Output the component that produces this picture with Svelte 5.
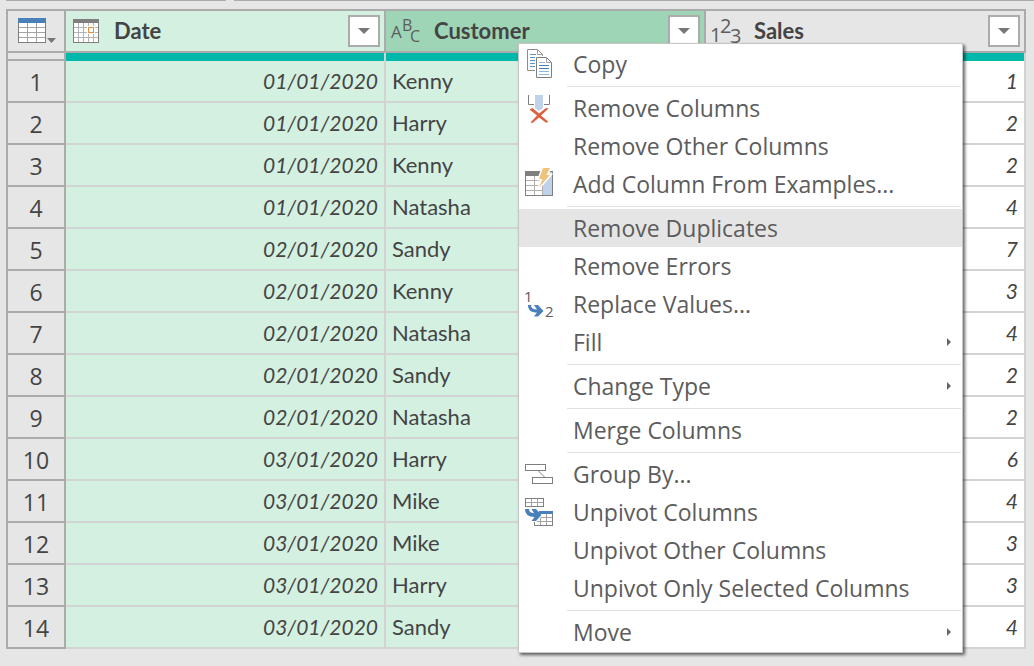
<script>
  const rows = [
    ['01/01/2020', 'Kenny', 1],
    ['01/01/2020', 'Harry', 2],
    ['01/01/2020', 'Kenny', 2],
    ['01/01/2020', 'Natasha', 4],
    ['02/01/2020', 'Sandy', 7],
    ['02/01/2020', 'Kenny', 3],
    ['02/01/2020', 'Natasha', 4],
    ['02/01/2020', 'Sandy', 2],
    ['02/01/2020', 'Natasha', 2],
    ['03/01/2020', 'Harry', 6],
    ['03/01/2020', 'Mike', 4],
    ['03/01/2020', 'Mike', 3],
    ['03/01/2020', 'Harry', 3],
    ['03/01/2020', 'Sandy', 4]
  ];

  const columns = [
    { name: 'Date', icon: 'date', state: 'selected' },
    { name: 'Customer', icon: 'text', state: 'active' },
    { name: 'Sales', icon: 'number', state: '' }
  ];

  const groups = [
    [{ label: 'Copy', icon: 'copy' }],
    [
      { label: 'Remove Columns', icon: 'remove' },
      { label: 'Remove Other Columns' },
      { label: 'Add Column From Examples...', icon: 'examples' }
    ],
    [
      { label: 'Remove Duplicates', current: true },
      { label: 'Remove Errors' },
      { label: 'Replace Values...', icon: 'replace' },
      { label: 'Fill', submenu: true }
    ],
    [{ label: 'Change Type', submenu: true }],
    [{ label: 'Merge Columns' }],
    [
      { label: 'Group By...', icon: 'group' },
      { label: 'Unpivot Columns', icon: 'unpivot' },
      { label: 'Unpivot Other Columns' },
      { label: 'Unpivot Only Selected Columns' }
    ],
    [{ label: 'Move', submenu: true }]
  ];
</script>

<div class="strip"><span class="strip-start"></span><span class="strip-rest"></span></div>

<main>
  <table>
    <colgroup>
      <col class="index-col" />
      <col /><col /><col />
    </colgroup>
    <thead>
      <tr class="names">
        <th class="corner">
          <button class="table-menu" aria-label="Table options">
            <svg width="40" height="28" viewBox="0 0 40 28" shape-rendering="crispEdges">
              <rect x="0" y="1" width="28" height="25" fill="#7f7f7f" />
              <rect x="1" y="6" width="26" height="19" fill="#fff" />
              <rect x="0" y="1" width="28" height="5" fill="#4a80ba" />
              <path d="M9.5 6V25M18.5 6V25M1 10.5H27M1 15.5H27M1 20.5H27" stroke="#a3a3a3" fill="none" />
              <path d="M29 21H38L33.5 26Z" fill="#777" shape-rendering="auto" />
            </svg>
          </button>
        </th>
        {#each columns as column}
          <th class={column.state} scope="col">
            <div class="heading">
              <span class="type">
                {#if column.icon === 'date'}
                  <svg width="32" height="40" viewBox="0 -4 32 40" shape-rendering="crispEdges">
                    <rect x="3" y="4" width="26" height="24" fill="#7f7f7f" />
                    <rect x="4" y="8" width="24" height="19" fill="#fff" />
                    <path d="M8.5 8V27M13.5 8V27M18.5 8V27M23.5 8V27M4 12.5H28M4 17.5H28M4 22.5H28" stroke="#b3b3b3" fill="none" />
                    <rect x="17" y="11" width="8" height="8" fill="#fff" />
                    <rect x="18.5" y="12.5" width="5" height="5" fill="#fff" stroke="#ed8b3a" />
                  </svg>
                {:else if column.icon === 'text'}
                  <svg width="32" height="40" viewBox="0 -4 32 40">
                    <text x="1" y="23" font-size="17">A</text>
                    <text x="12" y="16" font-size="16">B</text>
                    <text x="20" y="27" font-size="16">C</text>
                  </svg>
                {:else}
                  <svg width="32" height="40" viewBox="0 -4 32 40">
                    <text x="0" y="27" font-size="20">1</text>
                    <text x="10" y="18" font-size="20">2</text>
                    <text x="20" y="28" font-size="20">3</text>
                  </svg>
                {/if}
              </span>
              <span class="name">{column.name}</span>
              <button class="filter" aria-label="Filter {column.name}">
                <svg width="12" height="6" viewBox="0 0 12 6"><path d="M0 0H12L6 6Z" fill="#777" /></svg>
              </button>
            </div>
          </th>
        {/each}
      </tr>
      <tr class="quality">
        <td class="gap"></td><td></td><td></td><td></td>
      </tr>
    </thead>
    <tbody>
      {#each rows as [date, customer, sales], i}
        <tr>
          <th scope="row">{i + 1}</th>
          <td class="selected value">{date}</td>
          <td class="selected">{customer}</td>
          <td class="value">{sales}</td>
        </tr>
      {/each}
    </tbody>
  </table>
</main>

<div class="menu" role="menu">
  {#each groups as group, g}
    {#if g > 0}<div class="separator" role="separator"></div>{/if}
    {#each group as item}
      <button class="item" class:current={item.current} role="menuitem" aria-haspopup={item.submenu ? 'menu' : undefined}>
        <svg class="icon" width="32" height="38" viewBox="0 0 32 38" fill="none">
          {#if item.icon === 'copy'}
            <path d="M4.5 4.5H14.5L19.5 9.5V25.5H4.5Z" fill="#fff" stroke="#8c8c8c" />
            <path d="M14.5 4.5V9.5H19.5" stroke="#a3a3a3" />
            <path d="M7 9.5H13M7 12.5H16M7 15.5H16M7 18.5H16M7 21.5H16" stroke="#5b93cb" />
            <rect x="12" y="11" width="18" height="23" fill="#fff" />
            <path d="M13.5 12.5H23.5L28.5 17.5V32.5H13.5Z" fill="#fff" stroke="#7f7f7f" />
            <path d="M23.5 12.5V17.5H28.5" stroke="#a3a3a3" />
            <path d="M16 17.5H22M16 26.5H26M16 29.5H26" stroke="#8fb7de" />
            <path d="M16 20.5H26M16 23.5H26" stroke="#4a80ba" />
          {:else if item.icon === 'remove'}
            <path d="M5.5 6V15.5H11M21 15.5H26.5V6" stroke="#7f7f7f" />
            <path d="M12 6H20V19L16 22L12 19Z" fill="#bfd2e9" />
            <path d="M6.5 20.5L9.5 19L16 24.5L23 19L25.5 19.5L18 26.5L25 32.5L23.5 34L16 28.5L9.5 34L7.5 33.5L14 26.5Z" fill="#db6040" />
          {:else if item.icon === 'examples'}
            <rect x="2.5" y="6.5" width="27" height="24" fill="#fff" stroke="#7f7f7f" />
            <rect x="2" y="6" width="28" height="5" fill="#7f7f7f" />
            <rect x="20" y="7" width="9" height="23" fill="#bfd2e9" />
            <path d="M11.5 11V30M19.5 11V30M3 15.5H20M3 20.5H20M3 25.5H20" stroke="#b0b0b0" />
            <path d="M20 3H27L23.5 10H27L16 22.5L19.5 14H16Z" fill="#efc27e" stroke="#fff" stroke-width="3" paint-order="stroke" />
          {:else if item.icon === 'replace'}
            <text x="1" y="17" font-size="15">1</text>
            <text x="22" y="32" font-size="15">2</text>
            <path d="M5 20H8C8 23 10 24.5 14 24.5L11 20H15L20.5 26L15 31.5H11L14 27.5C8 27.5 5 25 5 20Z" fill="#4a80ba" />
          {:else if item.icon === 'group'}
            <rect x="2.5" y="9.5" width="20" height="6" fill="#fff" stroke="#7f7f7f" />
            <rect x="9.5" y="22.5" width="20" height="6" fill="#fff" stroke="#7f7f7f" />
            <path d="M15.5 16L22 22.5" stroke="#7f7f7f" />
          {:else if item.icon === 'unpivot'}
            <rect x="2.5" y="5.5" width="18" height="8" fill="#fff" stroke="#7f7f7f" />
            <path d="M8.5 6V13M14.5 6V13M3 9.5H20" stroke="#a3a3a3" />
            <rect x="11.5" y="18.5" width="18" height="14" fill="#fff" stroke="#7f7f7f" />
            <path d="M17.5 21V32M23.5 21V32M12 24.5H29M12 28.5H29" stroke="#a3a3a3" />
            <path d="M2 16H6C6 18.5 7.5 20 11 20L8.5 16H13L18.5 22L13 28H8.5L11.5 24C5.5 24 2 21 2 16Z" fill="#4a80ba" stroke="#fff" stroke-width="2" paint-order="stroke" />
            <rect x="16" y="18" width="14" height="3" fill="#4a80ba" />
          {/if}
        </svg>
        <span class="label">{item.label}</span>
        {#if item.submenu}
          <svg width="4" height="8" viewBox="0 0 4 8"><path d="M0 0L4 4L0 8Z" fill="#666" /></svg>
        {/if}
      </button>
    {/each}
  {/each}
</div>

<style>
  :global(body) {
    background: #e6e6e6;
  }

  .strip {
    display: flex;
    gap: 8px;
    height: 1px;
    padding-left: 6px;
  }

  .strip-start {
    width: 220px;
    background: #ababab;
  }

  .strip-rest {
    flex: 1;
    background: #ababab;
  }

  main {
    padding: 8px 8px 16px 6px;
  }

  table {
    width: 100%;
    table-layout: fixed;
    border-collapse: separate;
    border-spacing: 0;
    font-family: Lato, Calibri, sans-serif;
    font-size: 22px;
    line-height: 40px;
    color: #444;
  }

  .index-col {
    width: 60px;
  }

  th,
  td {
    box-sizing: border-box;
    padding: 0 6px;
    text-align: left;
    border: 0 solid #d3d3d3;
    border-width: 0 2px 2px 0;
  }

  tbody td {
    height: 42px;
    background: #fff;
  }

  tbody .selected {
    background: #d4f0e1;
  }

  tbody .value {
    text-align: right;
    font-size: 21px;
    font-style: italic;
  }

  tbody th {
    padding: 2px 0 0;
    border-color: #ababab;
    border-left-width: 2px;
    text-align: center;
    font-family: "Open Sans", "Segoe UI", sans-serif;
    font-size: 23px;
    font-weight: 400;
    line-height: 38px;
    background: #e6e6e6;
  }

  .names th {
    height: 44px;
    padding: 0 4px;
    border-color: #ababab;
    border-top-width: 2px;
    background: #e6e6e6;
  }

  .names .corner {
    padding: 0 0 0 10px;
    border-left-width: 2px;
  }

  .names .selected {
    background: #d4f0e1;
  }

  .names .active {
    background: #9fd5b7;
  }

  .quality td {
    height: 8px;
    padding: 0;
    border-bottom-width: 0;
    background: #01b8aa;
    line-height: 0;
  }

  .quality .gap {
    border: 2px solid #ababab;
    border-top-width: 0;
    background: #e6e6e6;
  }

  .heading {
    display: flex;
    align-items: center;
  }

  .type {
    display: flex;
    width: 44px;
  }

  .type text,
  .icon text {
    font-family: "Open Sans", "Segoe UI", sans-serif;
    font-weight: 500;
    fill: #5c5c5c;
  }

  .name {
    flex: 1;
  }

  button {
    margin: 0;
    border: 0;
    padding: 0;
    background: none;
    font: inherit;
    color: inherit;
  }

  .table-menu {
    display: flex;
  }

  .filter {
    display: flex;
    align-items: center;
    justify-content: center;
    width: 32px;
    height: 32px;
    border: 2px solid #ababab;
    background: #fff;
  }

  .menu {
    position: absolute;
    top: 43px;
    left: 518px;
    box-sizing: border-box;
    width: 445px;
    padding: 1px 0;
    border: 1px solid #c6c6c6;
    background: #fff;
    box-shadow: 2px 2px 3px rgba(0, 0, 0, 0.6);
    font-family: "Open Sans", "Segoe UI", sans-serif;
    font-size: 23px;
    line-height: 38px;
    color: #5c5c5c;
  }

  .item {
    display: flex;
    align-items: center;
    gap: 18px;
    width: 100%;
    height: 38px;
    padding: 0 11px 0 4px;
    text-align: left;
  }

  .current {
    background: #e5e5e5;
  }

  .label {
    flex: 1;
    white-space: nowrap;
  }

  .separator {
    height: 1px;
    margin: 3px 1px 2px 48px;
    background: #e1e1e1;
  }
</style>
